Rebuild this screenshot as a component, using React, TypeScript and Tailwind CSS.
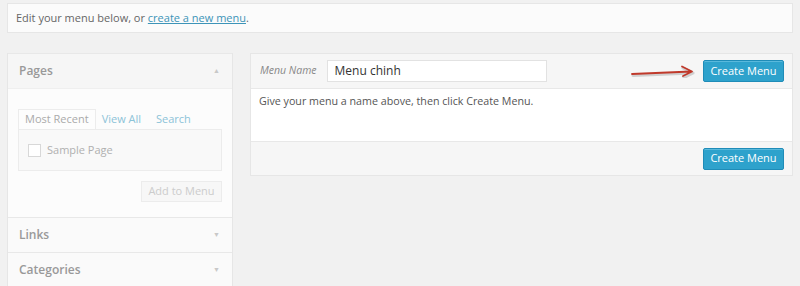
const font = { fontFamily: '"Open Sans", "Liberation Sans", sans-serif' }

function Arrow() {
  return (
    <svg width="70" height="14" viewBox="0 0 70 14" className="mr-[4px]">
      <g fill="none" strokeLinecap="round" strokeLinejoin="round">
        <path d="M3 10 L62 7.5 M53 2.5 L63 7.5 L54 12" stroke="#aaa" strokeWidth="3" transform="translate(1 1.5)" opacity="0.5" />
        <path d="M3 10 L62 7.5 M53 2.5 L63 7.5 L54 12" stroke="#c0392b" strokeWidth="1.8" />
      </g>
    </svg>
  )
}

function CreateButton() {
  return (
    <button className="h-[22px] w-[81px] rounded-[2px] border border-[#1f8cb8] bg-[#2ea2cc] text-[11px] text-white shadow-[inset_0_1px_0_rgba(120,200,230,0.6)]">
      Create Menu
    </button>
  )
}

function Section({ title, open }: { title: string; open?: boolean }) {
  return (
    <div className="flex h-[35px] items-center justify-between border-t border-[#e8e8e8] bg-[#fafafa] pl-[11px] pr-[12px]">
      <span className="text-[12px] font-semibold text-[#999]">{title}</span>
      <span className="text-[7px] text-[#c8c8c8]">{open ? "▲" : "▼"}</span>
    </div>
  )
}

export default function App() {
  return (
    <div className="h-[286px] w-[800px] overflow-hidden bg-[#f1f1f1] px-[7px] pt-[3px]" style={font}>
      <div className="flex h-[30px] items-center border border-[#e6e6e6] bg-[#fbfbfb] pl-[8px] text-[11px] text-[#666]">
        <span>
          Edit your menu below, or{" "}
          <a href="#" className="text-[#3d94b8] underline">create a new menu</a>.
        </span>
      </div>
      <div className="mt-[20px] flex">
        <div className="w-[226px] border border-t-0 border-[#e6e6e6] bg-[#fcfcfc]">
          <div className="flex h-[35px] items-center justify-between border-t border-[#e8e8e8] bg-[#f6f6f6] pl-[11px] pr-[12px]">
            <span className="text-[12px] font-semibold text-[#999]">Pages</span>
            <span className="text-[7px] text-[#c8c8c8]">▲</span>
          </div>
          <div className="border-t border-[#efefef] px-[10px] pb-[15px] pt-[20px]">
            <div className="flex h-[20px] items-end text-[11px]">
              <div className="flex h-[20px] items-center border border-b-0 border-[#ececec] bg-[#fdfdfd] px-[6px] text-[#aaa]">Most Recent</div>
              <div className="ml-[6px] flex h-[20px] items-center text-[#8cc3d8]">View All</div>
              <div className="ml-[15px] flex h-[20px] items-center text-[#8cc3d8]">Search</div>
            </div>
            <div className="flex h-[42px] items-center border border-[#ececec] bg-[#f9f9f9] pl-[9px]">
              <span className="h-[13px] w-[13px] border border-[#d8d8d8] bg-white" />
              <span className="ml-[6px] text-[11px] text-[#b0b0b0]">Sample Page</span>
            </div>
            <div className="mt-[10px] flex justify-end">
              <div className="flex h-[21px] w-[81px] items-center justify-center border border-[#ececec] bg-[#f7f7f7] text-[11px] text-[#ccc]">Add to Menu</div>
            </div>
          </div>
          <Section title="Links" />
          <Section title="Categories" />
        </div>
        <div className="ml-[17px] flex-1 self-start border border-[#e6e6e6]">
          <div className="flex h-[35px] items-center border-b border-[#e8e8e8] bg-[#f6f6f6] pl-[9px] pr-[8px]">
            <span className="text-[10.5px] italic text-[#888]">Menu Name</span>
            <div className="ml-[10px] flex h-[22px] w-[220px] items-center border border-[#e2e2e2] bg-white pl-[7px] text-[12px] text-[#333]">Menu chinh</div>
            <div className="ml-auto flex items-center">
              <Arrow />
              <CreateButton />
            </div>
          </div>
          <div className="h-[52px] bg-white pl-[8px] pt-[4px] text-[10.7px] text-[#555]">
            Give your menu a name above, then click Create Menu.
          </div>
          <div className="flex h-[34px] items-center justify-end border-t border-[#e8e8e8] bg-[#f6f6f6] pr-[8px]">
            <CreateButton />
          </div>
        </div>
      </div>
    </div>
  )
}
